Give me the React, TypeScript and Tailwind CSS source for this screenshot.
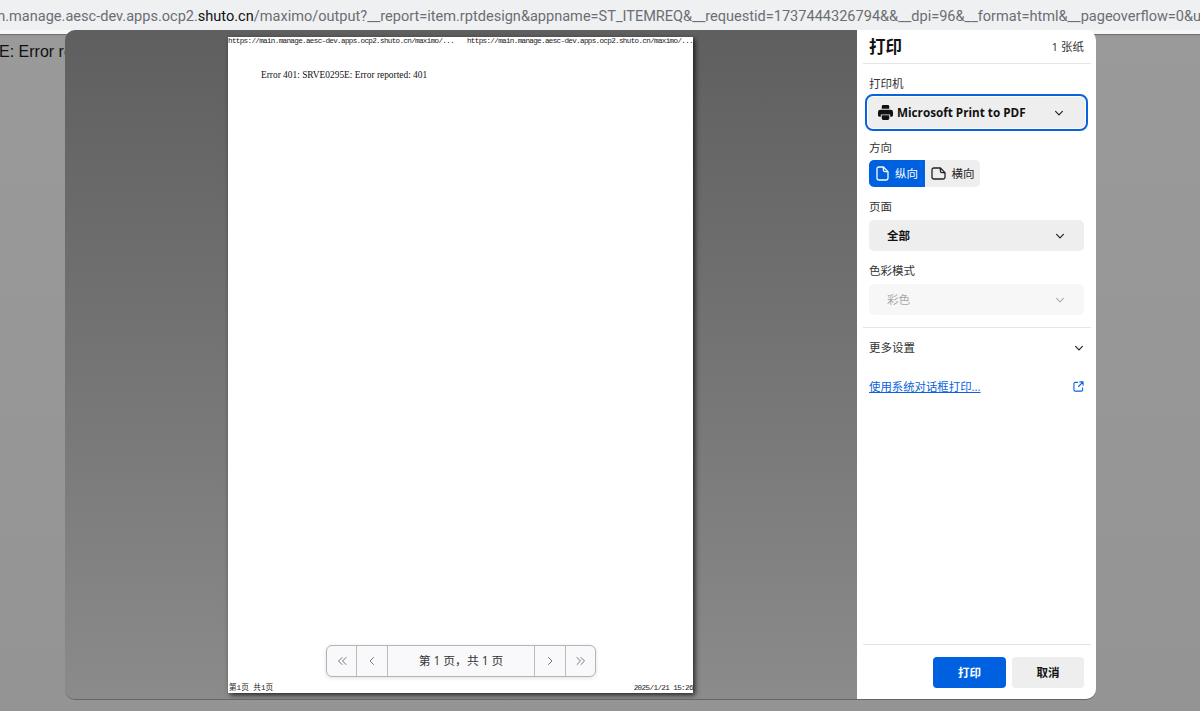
import React from "react";

const cjk = "font-['Open_Sans','Noto_Sans_CJK_SC',sans-serif]";

function Chevron({ className = "" }: { className?: string }) {
  return (
    <svg viewBox="0 0 12 12" className={`w-3 h-3 ${className}`} fill="none" stroke="currentColor" strokeWidth="1.2" strokeLinecap="round" strokeLinejoin="round">
      <path d="M2.6 4.4 6 7.8l3.4-3.4" />
    </svg>
  );
}

function PageIcon() {
  return (
    <svg viewBox="0 0 13 15" className="w-[13px] h-[15px]" fill="none" stroke="currentColor" strokeWidth="1.3" strokeLinejoin="round">
      <path d="M2.8 1h4.6L12 5.6v6.6a1.8 1.8 0 0 1-1.8 1.8H2.8A1.8 1.8 0 0 1 1 12.2V2.8A1.8 1.8 0 0 1 2.8 1Z" />
      <path d="M7.4 1v3a1.6 1.6 0 0 0 1.6 1.6h3" />
    </svg>
  );
}

function LandscapeIcon() {
  return (
    <svg viewBox="0 0 15 13" className="w-[15px] h-[13px]" fill="none" stroke="currentColor" strokeWidth="1.3" strokeLinejoin="round">
      <path d="M2.8 1h6.6L14 5.6v4.6a1.8 1.8 0 0 1-1.8 1.8H2.8A1.8 1.8 0 0 1 1 10.2V2.8A1.8 1.8 0 0 1 2.8 1Z" />
      <path d="M9.4 1v3A1.6 1.6 0 0 0 11 5.6h3" />
    </svg>
  );
}

function PrinterIcon() {
  return (
    <svg viewBox="0 0 16 16" className="w-[15px] h-[15px]" fill="currentColor">
      <path d="M4 1.5A1.5 1.5 0 0 1 5.5 0h5A1.5 1.5 0 0 1 12 1.5V4H4V1.5Z" />
      <path fillRule="evenodd" d="M2.5 5h11A2.5 2.5 0 0 1 16 7.5V11a1.5 1.5 0 0 1-1.5 1.5H13V10H3v2.5H1.5A1.5 1.5 0 0 1 0 11V7.5A2.5 2.5 0 0 1 2.5 5Z" />
      <path d="M4 11h8v3.5a1.5 1.5 0 0 1-1.5 1.5h-5A1.5 1.5 0 0 1 4 14.5V11Z" />
    </svg>
  );
}

function ExternalIcon() {
  return (
    <svg viewBox="0 0 12 12" className="w-[11px] h-[11px] -mt-[2px]" fill="none" stroke="currentColor" strokeWidth="1.2" strokeLinecap="round" strokeLinejoin="round">
      <path d="M5 1.5H2.5a1.5 1.5 0 0 0-1.5 1.5v6.5A1.5 1.5 0 0 0 2.5 11H9a1.5 1.5 0 0 0 1.5-1.5V7.5" />
      <path d="M7.5 1H11v3.5M11 1 6 6" />
    </svg>
  );
}

function PagerIcon({ d }: { d: string }) {
  return (
    <svg viewBox="0 0 12 12" className="w-3 h-3 text-[#777]" fill="none" stroke="currentColor" strokeWidth="1" strokeLinecap="round" strokeLinejoin="round">
      <path d={d} />
    </svg>
  );
}

function Label({ children }: { children: React.ReactNode }) {
  return <div className="text-[11.5px] leading-[15px] text-[#333] h-4">{children}</div>;
}

function Select({ text, disabled }: { text: string; disabled?: boolean }) {
  return (
    <div className={`mt-[5px] h-[31px] w-[215px] rounded-[5px] flex items-center justify-between pl-[18px] pr-[18px] pt-[1px] text-[11.5px] ${disabled ? "bg-[#f7f7f7] text-[#a8a8a8]" : "bg-[#eeeeee] text-[#111] font-semibold"}`}>
      <span>{text}</span>
      <Chevron className={disabled ? "text-[#b0b0b0]" : "text-[#222]"} />
    </div>
  );
}

export default function App() {
  return (
    <div className={`relative w-[1200px] h-[711px] overflow-hidden bg-gradient-to-b from-[#9a9a9a] to-[#949494] ${cjk}`}>
      <div className="h-[34px] bg-[#eff0f2] border-b-[4px] border-[#f7f7f7] shadow-[0_1px_1px_rgba(0,0,0,0.25)] flex items-center overflow-hidden whitespace-nowrap font-['Roboto',sans-serif] text-[14.55px] text-[#6b6e72] pt-[3px]">
        <span className="-ml-[27px]">
          main.manage.aesc-dev.apps.ocp2.<span className="text-[#111]">shuto.cn</span>/maximo/output?__report=item.rptdesign&amp;appname=ST_ITEMREQ&amp;__requestid=1737444326794&amp;&amp;__dpi=96&amp;__format=html&amp;__pageoverflow=0&amp;u
        </span>
      </div>
      <div className="font-['Liberation_Sans',sans-serif] text-[16px] text-[#111] leading-[18px] pt-[9px] -ml-[1px] whitespace-nowrap">E: Error reported: 401</div>

      <div className="absolute left-[65px] top-[30px] w-[1031px] h-[669px] rounded-[10px] flex overflow-hidden shadow-[0_1px_0_rgba(70,70,70,0.6)]">
        <div className="relative w-[792px] bg-gradient-to-b from-[#5f5f5f] to-[#8b8b8b] pl-[163px] pt-[7px]">
          <div className="relative w-[465px] h-[656px] bg-white shadow-[2px_2px_5px_rgba(0,0,0,0.75)] text-[#222]">
            <div className="flex justify-between font-['Liberation_Mono','Noto_Sans_CJK_SC',monospace] text-[7.6px] tracking-[-0.66px] leading-[9px] h-[9px] whitespace-nowrap">
              <span>https://main.manage.aesc-dev.apps.ocp2.shuto.cn/maximo/...</span>
              <span>https://main.manage.aesc-dev.apps.ocp2.shuto.cn/maximo/...</span>
            </div>
            <div className="ml-[33px] mt-[23px] font-['Liberation_Serif',serif] text-[9.4px] leading-[12px] text-[#111]">
              Error 401: SRVE0295E: Error reported: 401
            </div>
            <div className="absolute left-0 right-0 bottom-0 flex justify-between items-end font-['Liberation_Mono','Noto_Sans_CJK_SC',monospace] text-[7.6px] leading-[9px] h-[9px]">
              <span className="pl-[1px]">第1页 共1页</span>
              <span className="tracking-[-0.6px]">2025/1/21 15:26</span>
            </div>
            <div className="absolute left-[98px] top-[608px] w-[270px] h-[32px] rounded-[6px] bg-[#f9f9fb] border border-[#b4b4b4] shadow-[0_1px_4px_rgba(0,0,0,0.12)] flex items-stretch text-[11.8px] text-[#333]">
              <div className="w-[30px] flex items-center justify-center border-r border-[#bcbcbc]"><PagerIcon d="M6 2.5 2.5 6 6 9.5M10 2.5 6.5 6 10 9.5" /></div>
              <div className="w-[31px] flex items-center justify-center border-r border-[#bcbcbc]"><PagerIcon d="M7.5 2.5 4 6l3.5 3.5" /></div>
              <div className="flex-1 flex items-center justify-center">第 1 页，共 1 页</div>
              <div className="w-[31px] flex items-center justify-center border-l border-[#bcbcbc]"><PagerIcon d="M4.5 2.5 8 6l-3.5 3.5" /></div>
              <div className="w-[30px] flex items-center justify-center border-l border-[#bcbcbc]"><PagerIcon d="M2 2.5 5.5 6 2 9.5M6 2.5 9.5 6 6 9.5" /></div>
            </div>
          </div>
        </div>

        <div className="w-[239px] bg-white flex flex-col pl-[6px] pr-[5px]">
          <div className="h-[34px] border-b border-[#e6e6e6] flex items-center justify-between pl-[6px] pr-[7px] shrink-0">
            <span className="text-[16.5px] font-bold text-[#111] leading-[34px]">打印</span>
            <span className="text-[11.5px] text-[#333]">1 张纸</span>
          </div>
          <div className="pl-[6px] pr-[7px] pt-[12px] flex-1 flex flex-col">
            <Label>打印机</Label>
            <div className="mt-[2px] -ml-[4px] w-[223px] h-[37px] rounded-[8px] border-2 border-[#0a63dc] p-[1px] bg-white">
              <div className="h-full rounded-[5px] bg-[#eeeeee] flex items-center pl-[10px] pr-[20px] text-[#111]">
                <PrinterIcon />
                <span className="ml-[4px] text-[11.7px] font-bold flex-1">Microsoft Print to PDF</span>
                <Chevron className="text-[#222]" />
              </div>
            </div>
            <div className="mt-[9px]"><Label>方向</Label></div>
            <div className="mt-[4px] flex h-[27px] w-[111px] rounded-[5px] overflow-hidden text-[11.5px]">
              <div className="w-[56px] bg-[#0061e0] text-white flex items-center justify-center gap-[6px]"><PageIcon /><span>纵向</span></div>
              <div className="w-[55px] bg-[#eeeeee] text-[#222] flex items-center justify-center gap-[6px]"><LandscapeIcon /><span>横向</span></div>
            </div>
            <div className="mt-[12px]"><Label>页面</Label></div>
            <Select text="全部" />
            <div className="mt-[12px]"><Label>色彩模式</Label></div>
            <Select text="彩色" disabled />
            <div className="-ml-[6px] -mr-[7px] mt-[12px] border-t border-[#e6e6e6]" />
            <div className="mt-[12px] flex items-center justify-between text-[11.5px] leading-[15px] text-[#333] h-4">
              <span className="pb-[1px]">更多设置</span>
              <Chevron className="text-[#222] -mr-[1px]" />
            </div>
            <div className="mt-[23px] flex items-center justify-between text-[11.4px] leading-[15px] text-[#0a63dc] h-4">
              <span className="underline pb-[1px]">使用系统对话框打印...</span>
              <ExternalIcon />
            </div>
          </div>
          <div className="h-[55px] border-t border-[#e2e2e2] flex justify-end gap-[6px] pt-[12px] pr-[7px] shrink-0 text-[11.5px] font-semibold">
            <div className="w-[73px] h-[31px] rounded-[4px] bg-[#0061e0] text-white flex items-center justify-center">打印</div>
            <div className="w-[72px] h-[31px] rounded-[4px] bg-[#eeeeee] text-[#111] flex items-center justify-center">取消</div>
          </div>
        </div>
      </div>
    </div>
  );
}
